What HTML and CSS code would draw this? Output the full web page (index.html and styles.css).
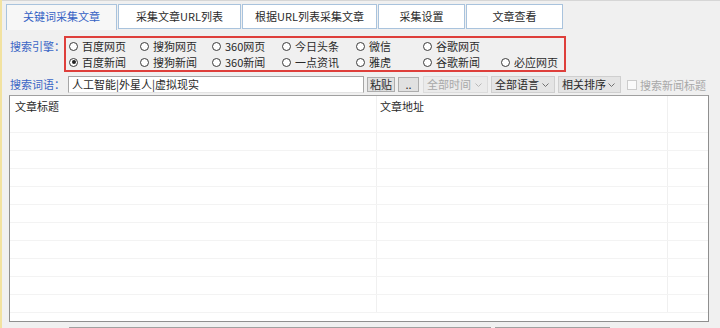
FILE: index.html
```html
<!DOCTYPE html>
<html lang="zh-CN">
<head>
    <meta charset="UTF-8" />
    <title>文章采集</title>
    <link rel="stylesheet" href="styles.css">
</head>
<body>

    <div class="tabs">
        <div class="tab aktif" style="width:111px">关键词采集文章</div>
        <div class="tab" style="width:123px">采集文章URL列表</div>
        <div class="tab" style="width:135px">根据URL列表采集文章</div>
        <div class="tab" style="width:87px">采集设置</div>
        <div class="tab" style="width:97px">文章查看</div>
    </div>

    <div class="panel">
        <div class="satir motor-satir">
            <span class="etiket etiket-motor">搜索引擎：</span>
            <div class="motor-kutu">
                <label class="secim"><i class="radyo"></i>百度网页</label>
                <label class="secim"><i class="radyo"></i>搜狗网页</label>
                <label class="secim"><i class="radyo"></i>360网页</label>
                <label class="secim"><i class="radyo"></i>今日头条</label>
                <label class="secim"><i class="radyo"></i>微信</label>
                <label class="secim"><i class="radyo"></i>谷歌网页</label>
                <span></span>
                <label class="secim"><i class="radyo secili"></i>百度新闻</label>
                <label class="secim"><i class="radyo"></i>搜狗新闻</label>
                <label class="secim"><i class="radyo"></i>360新闻</label>
                <label class="secim"><i class="radyo"></i>一点资讯</label>
                <label class="secim"><i class="radyo"></i>雅虎</label>
                <label class="secim"><i class="radyo"></i>谷歌新闻</label>
                <label class="secim"><i class="radyo"></i>必应网页</label>
            </div>
        </div>

        <div class="satir arama-satir">
            <span class="etiket etiket-arama">搜索词语：</span>
            <div class="kelime">人工智能|外星人|虚拟现实</div>
            <button class="dugme yapistir">粘贴</button>
            <button class="dugme nokta">..</button>
            <div class="secenek pasif" style="width:65px">全部时间<svg width="7" height="4" viewBox="0 0 7 4"><path d="M0.5 0.5 L3.5 3.5 L6.5 0.5" fill="none" stroke="#b8b8b8"/></svg></div>
            <div class="secenek" style="width:64px">全部语言<svg width="7" height="4" viewBox="0 0 7 4"><path d="M0.5 0.5 L3.5 3.5 L6.5 0.5" fill="none" stroke="#707070"/></svg></div>
            <div class="secenek" style="width:63px">相关排序<svg width="7" height="4" viewBox="0 0 7 4"><path d="M0.5 0.5 L3.5 3.5 L6.5 0.5" fill="none" stroke="#707070"/></svg></div>
            <label class="kutucuk"><i class="kare"></i>搜索新闻标题</label>
        </div>

        <div class="liste">
            <div class="liste-baslik">
                <div class="hucre h1">文章标题</div>
                <div class="hucre h2">文章地址</div>
                <div class="hucre h3"></div>
            </div>
            <div class="liste-govde" id="govde"></div>
        </div>

        <div class="alt">
            <div class="alt-kutu" style="width:422px"></div>
            <div class="alt-kutu" style="width:115px"></div>
        </div>
    </div>

    <script>
        // bos satirlar
        const govde = document.getElementById("govde");
        for (let i = 0; i < 11; i++) {
            govde.innerHTML += '<div class="liste-satir"><div class="hucre h1"></div><div class="hucre h2"></div><div class="hucre h3"></div></div>';
        }
    </script>

</body>
</html>
```

FILE: styles.css
```css
body {
    margin: 0;
    width: 718px;
    height: 328px;
    overflow: hidden;
    background: #f0f0f0;
    border-left: 2px solid #f2e2a0;
    font-family: "Noto Sans CJK SC", "Noto Sans", sans-serif;
    font-size: 11px;
    color: #2a2a2a;
    white-space: nowrap;
}

.tabs {
    display: flex;
    height: 25px;
    padding: 3px 0 0 4px;
    border-top: 1px solid #d6d6d6;
}

.tab {
    box-sizing: border-box;
    height: 25px;
    line-height: 23px;
    text-align: center;
    background: #ffffff;
    border: 1px solid #a9c3dd;
    margin-right: 1px;
}

    .tab.aktif {
        background: #f7f7f7;
        color: #3461c4;
        border-bottom: none;
        height: 26px;
    }

.panel {
    padding: 7px 0 0 8px;
}

.satir {
    display: flex;
    align-items: flex-start;
}

.etiket {
    color: #3a66c6;
    flex: none;
}

.etiket-motor {
    width: 54px;
    margin-top: 2px;
}

.etiket-arama {
    width: 58px;
    line-height: 17px;
}

.motor-kutu {
    box-sizing: border-box;
    width: 502px;
    height: 36px;
    border: 2px solid #de3f3b;
    padding-left: 3px;
    display: grid;
    grid-template-columns: 71px 72px 70px 74px 67px 78px auto;
    grid-auto-rows: 16px;
}

.secim {
    display: flex;
    align-items: center;
}

.radyo {
    box-sizing: border-box;
    width: 9px;
    height: 9px;
    border: 1px solid #3c3c3c;
    border-radius: 50%;
    background: #ffffff;
    margin-right: 4px;
    position: relative;
}

    .radyo.secili::after {
        content: "";
        position: absolute;
        left: 1.5px;
        top: 1.5px;
        width: 4px;
        height: 4px;
        border-radius: 50%;
        background: #222;
    }

.arama-satir {
    margin-top: 4px;
    height: 17px;
    align-items: center;
}

.kelime {
    box-sizing: border-box;
    width: 296px;
    height: 17px;
    line-height: 15px;
    background: #ffffff;
    border: 1px solid #a6a6a6;
    border-bottom-color: #e3e3e3;
    padding-left: 3px;
    margin-right: 3px;
}

.dugme {
    box-sizing: border-box;
    height: 15px;
    padding: 0;
    font-family: inherit;
    font-size: 11px;
    line-height: 13px;
    background: #e1e1e1;
    border: 1px solid #adadad;
    color: #2a2a2a;
}

.yapistir {
    width: 28px;
    margin-right: 3px;
}

.nokta {
    width: 21px;
    margin-right: 4px;
}

.secenek {
    box-sizing: border-box;
    height: 17px;
    line-height: 15px;
    display: flex;
    align-items: center;
    justify-content: space-between;
    padding: 0 5px 0 3px;
    background: #e4e4e4;
    border: 1px solid #cfcfcf;
    margin-right: 3px;
}

    .secenek.pasif {
        color: #a8a8a8;
        background: #ebebeb;
        border-color: #dcdcdc;
    }

.kutucuk {
    display: flex;
    align-items: center;
    color: #a8a8a8;
    margin-left: 3px;
}

.kare {
    box-sizing: border-box;
    width: 10px;
    height: 10px;
    border: 1px solid #cccccc;
    background: #fafafa;
    margin-right: 3px;
}

.liste {
    box-sizing: border-box;
    width: 700px;
    height: 227px;
    margin: 2px 0 0 -1px;
    background: #ffffff;
    border: 1px solid #8f8f8f;
    border-top-color: #a0a0a0;
    overflow: hidden;
}

.liste-baslik {
    display: flex;
    height: 19px;
    line-height: 20px;
}

    .liste-baslik .h1 {
        padding-left: 5px;
    }

    .liste-baslik .h2 {
        padding-left: 3px;
    }

.liste-satir {
    display: flex;
    height: 18px;
    border-bottom: 1px solid #f3f3f3;
    box-sizing: border-box;
}

.hucre {
    box-sizing: border-box;
    border-right: 1px solid #f0f0f0;
}

.h1 {
    width: 367px;
}

.h2 {
    width: 291px;
}

.h3 {
    width: 40px;
    border-right: none;
}

.alt {
    display: flex;
    gap: 4px;
    margin: 5px 0 0 59px;
}

.alt-kutu {
    height: 4px;
    border-top: 1px solid #a0a0a0;
    background: #e6e6e6;
}
```
